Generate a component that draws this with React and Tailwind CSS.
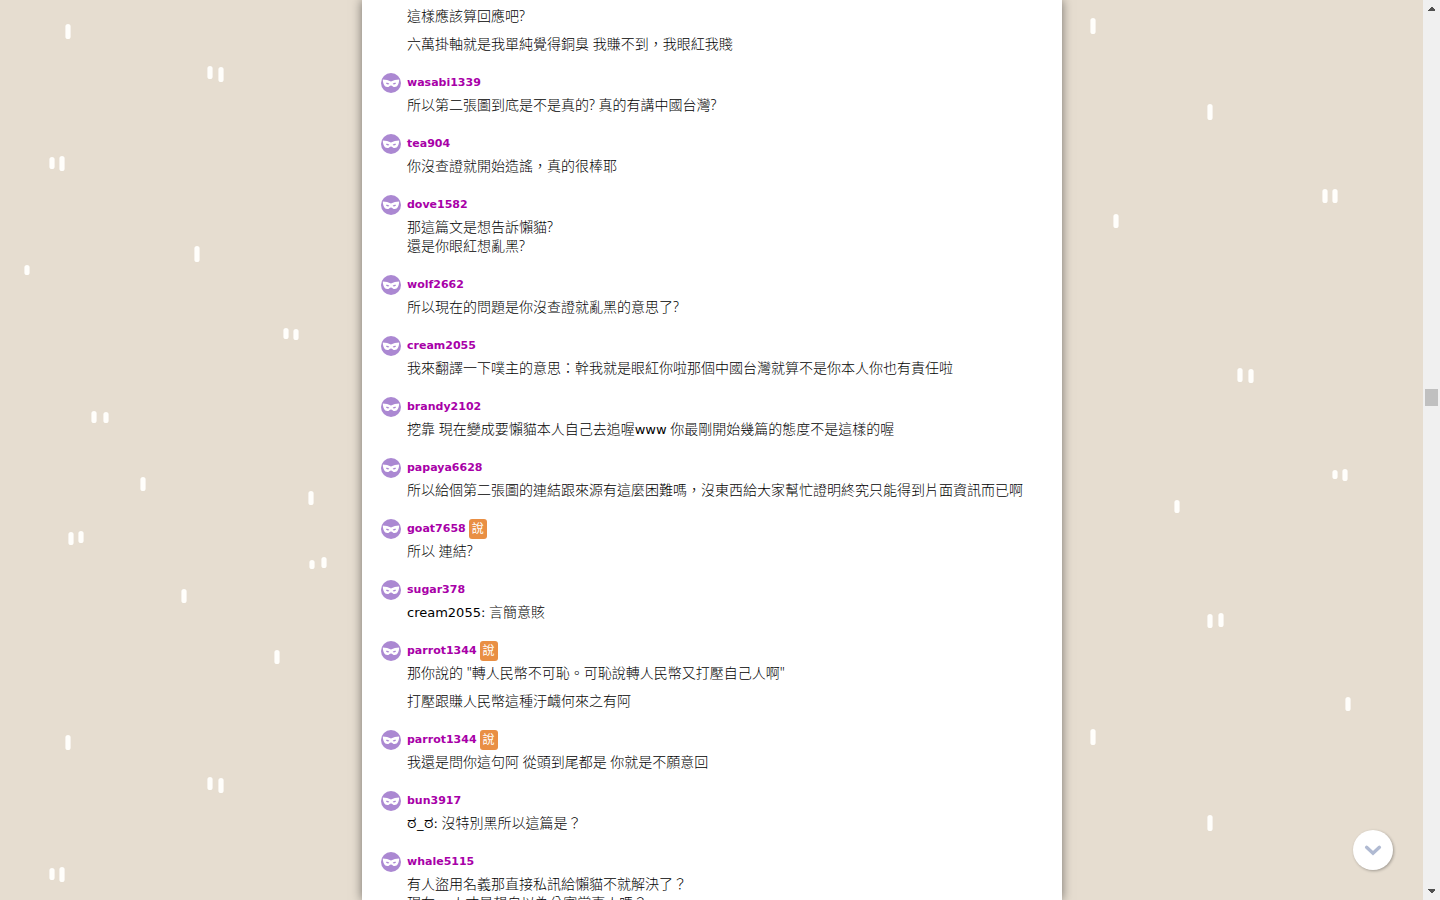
import React from 'react';

const responses = [
    { paragraphs: ['這樣應該算回應吧?', '六萬掛軸就是我單純覺得銅臭 我賺不到，我眼紅我賤'] },
    { name: 'wasabi1339', paragraphs: ['所以第二張圖到底是不是真的? 真的有講中國台灣?'] },
    { name: 'tea904', paragraphs: ['你沒查證就開始造謠，真的很棒耶'] },
    { name: 'dove1582', paragraphs: ['那這篇文是想告訴懶貓?\n還是你眼紅想亂黑?'] },
    { name: 'wolf2662', paragraphs: ['所以現在的問題是你沒查證就亂黑的意思了?'] },
    { name: 'cream2055', paragraphs: ['我來翻譯一下噗主的意思：幹我就是眼紅你啦那個中國台灣就算不是你本人你也有責任啦'] },
    { name: 'brandy2102', paragraphs: ['挖靠 現在變成要懶貓本人自己去追喔www 你最剛開始幾篇的態度不是這樣的喔'] },
    { name: 'papaya6628', paragraphs: ['所以給個第二張圖的連結跟來源有這麼困難嗎，沒東西給大家幫忙證明終究只能得到片面資訊而已啊'] },
    { name: 'goat7658', says: true, paragraphs: ['所以 連結?'] },
    { name: 'sugar378', paragraphs: ['cream2055: 言簡意賅'] },
    { name: 'parrot1344', says: true, paragraphs: ['那你說的 "轉人民幣不可恥。可恥說轉人民幣又打壓自己人啊"', '打壓跟賺人民幣這種汙衊何來之有阿'] },
    { name: 'parrot1344', says: true, paragraphs: ['我還是問你這句阿 從頭到尾都是 你就是不願意回'] },
    { name: 'bun3917', paragraphs: ['ಠ_ಠ: 沒特別黑所以這篇是？'] },
    { name: 'whale5115', paragraphs: ['有人盜用名義那直接私訊給懶貓不就解決了？\n現在po人才是想自以為公審當事人嗎？'] },
];

// [x, top, height] of each dash; the tile repeats every 711px
const leftDashes = [
    [68, 24, 15], [210, 66, 13], [221, 67, 15], [52, 157, 12], [62, 156, 15],
    [197, 246, 16], [27, 265, 10], [286, 328, 11], [296, 329, 11], [94, 411, 12],
    [106, 412, 11], [143, 477, 14], [311, 491, 14], [71, 532, 13], [81, 531, 12],
    [312, 560, 9], [324, 557, 11], [184, 589, 14], [277, 650, 14],
];

const rightDashes = [
    [31, 18, 16], [148, 104, 16], [263, 189, 14], [273, 189, 14], [54, 214, 14],
    [178, 368, 14], [189, 369, 14], [273, 470, 9], [283, 469, 12], [115, 500, 13],
    [148, 614, 14], [159, 613, 14], [286, 697, 14],
];

export default function App() {
    return (
        <div className="flex h-screen overflow-hidden bg-[#e6ddd0] font-['Noto_Sans','Noto_Sans_CJK_TC',sans-serif]">
            <div className="relative flex min-w-0 flex-1 justify-center pl-px">
                <Rain id="rain-left" dashes={leftDashes} className="absolute top-0 left-0 h-full w-[361px]" />
                <Rain id="rain-right" dashes={rightDashes} className="absolute top-0 right-0 h-full w-[361px]" />

                <main className="relative h-full w-full max-w-[700px] overflow-hidden bg-white px-[19px] pt-[6px] shadow-[0_0_10px_rgba(0,0,0,0.5)]">
                    {responses.map((response, index) => (
                        <Response key={index} {...response} />
                    ))}
                </main>

                <button
                    type="button"
                    aria-label="Scroll to bottom"
                    className="absolute right-[30px] bottom-[30px] flex h-10 w-10 items-center justify-center rounded-full bg-white shadow-[1px_1px_3px_rgba(0,0,0,0.3)]"
                >
                    <svg viewBox="0 0 20 20" className="h-5 w-5" fill="none" stroke="#b0bad2" strokeWidth="3.4">
                        <path d="M3.6 7.3 L10 13.2 L16.4 7.3" strokeLinecap="round" strokeLinejoin="miter" />
                    </svg>
                </button>
            </div>
            <Scrollbar />
        </div>
    );
}

function Response({ name, says, paragraphs }) {
    return (
        <article className="mb-5">
            {name && (
                <header className="mb-[2px] flex h-5 items-center">
                    <Mask />
                    <a href="#" className="ml-[6px] font-['DejaVu_Sans',sans-serif] text-[11px] leading-5 font-bold text-[#a800a8]">{name}</a>
                    {says && (
                        <span className="ml-[3px] flex h-5 w-[18px] items-center justify-center rounded-[3px] bg-[#e98f44] text-xs text-white">說</span>
                    )}
                </header>
            )}
            <div className="space-y-[9px] pl-[26px] text-sm leading-[19px] font-light text-black">
                {paragraphs.map((text, index) => (
                    <p key={index} className="whitespace-pre-line"><Content text={text} /></p>
                ))}
            </div>
        </article>
    );
}

// latin runs get a wider face, kannada letters a larger size
function Content({ text }) {
    return text.split(/([a-z0-9:_]+|\u0ca0)/).map((part, index) => {
        if (index % 2 === 0) return part;
        if (part === '\u0ca0') return <span key={index} className="text-lg leading-[14px]">{part}</span>;
        return <span key={index} className="font-['DejaVu_Sans',sans-serif] text-[13px] leading-[14px] font-normal">{part}</span>;
    });
}

function Mask() {
    return (
        <svg viewBox="0 0 20 20" className="h-5 w-5 shrink-0" aria-hidden="true">
            <circle cx="10" cy="10" r="10" fill="#ab88d2" />
            <path
                fill="#fff"
                fillRule="evenodd"
                d="M1.8 6.6 C4.8 6.7 7.6 7.3 10 8.6 C12.4 7.3 15.2 6.7 18.2 6.6 C18 10.8 16.6 14 13.8 14.1 C11.8 14.1 11.2 12.4 10 12.4 C8.8 12.4 8.2 14.1 6.2 14.1 C3.4 14 2 10.8 1.8 6.6 Z M5 10 C5.5 11.6 7.2 11.8 8.4 11 C7.4 10 6.2 9.6 5 10 Z M15 10 C14.5 11.6 12.8 11.8 11.6 11 C12.6 10 13.8 9.6 15 10 Z"
            />
        </svg>
    );
}

function Rain({ id, dashes, className }) {
    return (
        <svg className={className} aria-hidden="true">
            <defs>
                <pattern id={id} width="361" height="711" patternUnits="userSpaceOnUse">
                    {dashes.map(([x, top, height]) => (
                        <rect key={`${x}-${top}`} x={x - 2.6} y={top} width="5.2" height={height} rx="2.6" fill="#fffefb" />
                    ))}
                </pattern>
            </defs>
            <rect width="361" height="100%" fill={`url(#${id})`} />
        </svg>
    );
}

function Scrollbar() {
    return (
        <div className="flex w-[17px] shrink-0 flex-col items-center bg-[#f0f0f0]" aria-hidden="true">
            <svg viewBox="0 0 17 17" className="h-[17px] w-[17px]" fill="#505050" shapeRendering="crispEdges">
                <path d="M5 11 H12 V10 L8.5 6.5 L5 10 Z" />
            </svg>
            <div className="flex w-full flex-1 flex-col items-center">
                <div className="basis-[43%]" />
                <div className="h-[17px] w-[13px] bg-[#c0c0c0]" />
            </div>
            <svg viewBox="0 0 17 17" className="h-[17px] w-[17px]" fill="#505050" shapeRendering="crispEdges">
                <path d="M5 6 H12 V7 L8.5 10.5 L5 7 Z" />
            </svg>
        </div>
    );
}
